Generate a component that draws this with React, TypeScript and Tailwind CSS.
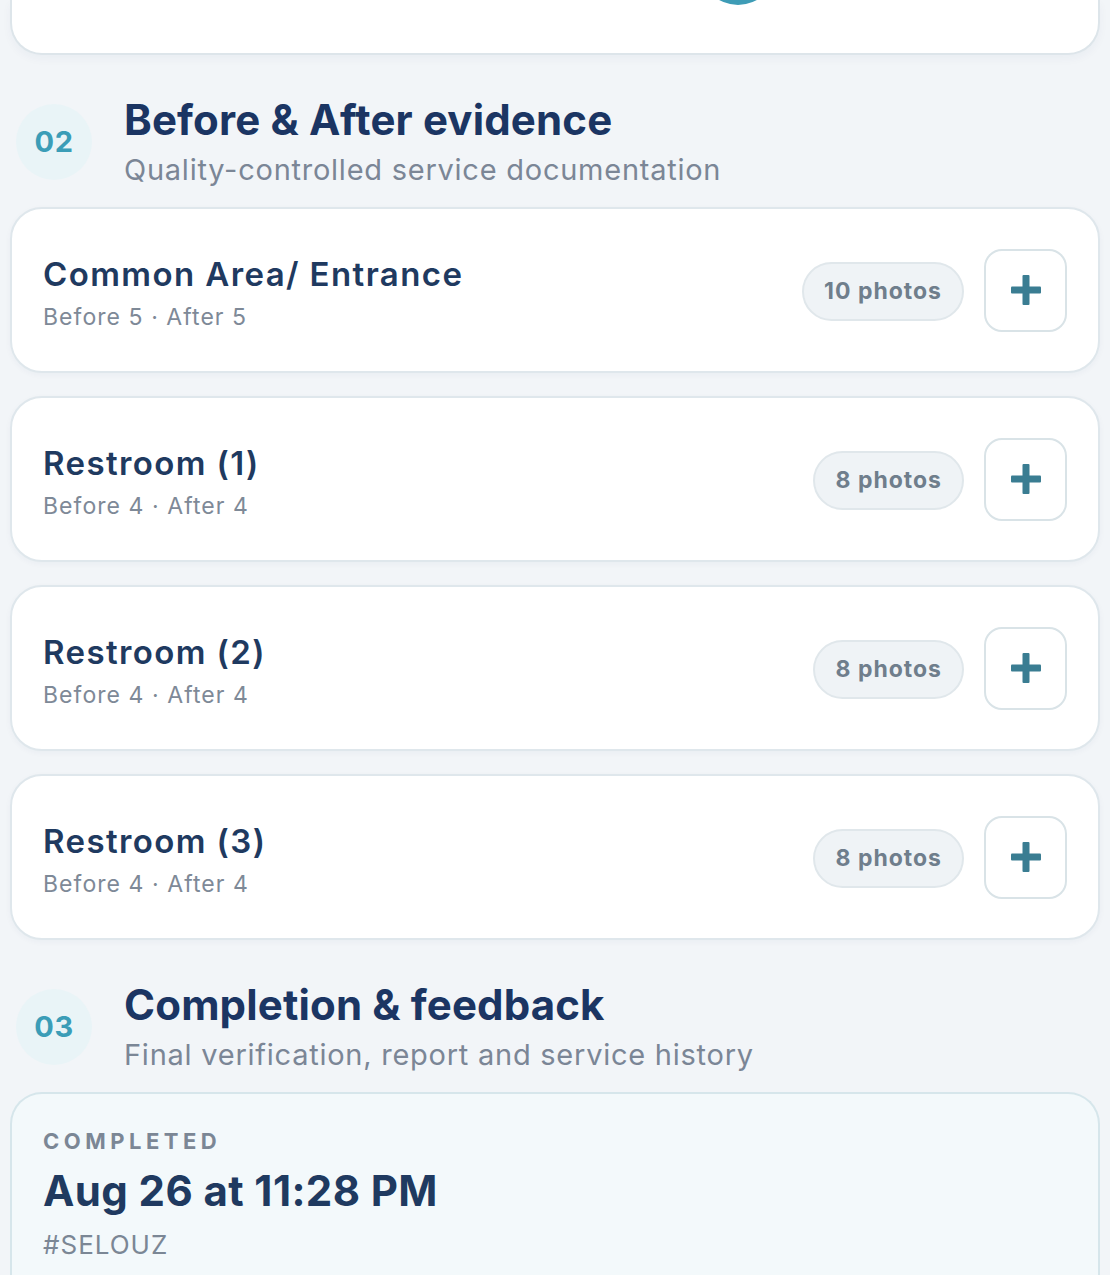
import React from "react";

const rooms = [
  { name: "Common Area/ Entrance", sub: "Before 5 · After 5", photos: "10 photos" },
  { name: "Restroom (1)", sub: "Before 4 · After 4", photos: "8 photos" },
  { name: "Restroom (2)", sub: "Before 4 · After 4", photos: "8 photos" },
  { name: "Restroom (3)", sub: "Before 4 · After 4", photos: "8 photos" },
];

function SectionHeader({ num, title, sub }: { num: string; title: string; sub: string }) {
  return (
    <div className="flex items-center pl-[6px]">
      <div className="w-[76px] h-[76px] rounded-full bg-[#e9f4f7] flex items-center justify-center shrink-0">
        <span className="text-[29px] font-bold text-[#3b9db7] tracking-[0.5px]">{num}</span>
      </div>
      <div className="ml-[32px] flex flex-col">
        <div className="text-[42px] leading-[48px] font-bold text-[#1b3563] tracking-[0.15px]">{title}</div>
        <div className="text-[29px] leading-[36px] text-[#7b8696] mt-[8px] tracking-[0.75px]">{sub}</div>
      </div>
    </div>
  );
}

function RoomCard({ name, sub, photos }: { name: string; sub: string; photos: string }) {
  return (
    <div className="h-[166px] rounded-[32px] border-2 border-[#dfe7ec] bg-white flex items-center pl-[31px] pr-[31px] shadow-[0_2px_6px_rgba(30,60,90,0.04)]">
      <div className="flex-1 flex flex-col pt-[6px]">
        <div className="text-[33px] leading-[40px] font-semibold text-[#1f3a60] tracking-[1.4px]">{name}</div>
        <div className="text-[23px] leading-[30px] text-[#7e8997] mt-[8px] tracking-[1.05px]">{sub}</div>
      </div>
      <div className="h-[59px] px-[20px] rounded-full bg-[#eff3f6] border-2 border-[#e0e7eb] flex items-center mt-[2px]">
        <span className="text-[23px] font-bold text-[#6f7e8c] tracking-[1px]">{photos}</span>
      </div>
      <div className="ml-[20px] w-[83px] h-[83px] rounded-[18px] border-2 border-[#d9e3e7] bg-white flex items-center justify-center">
        <svg width="32" height="32" viewBox="0 0 32 32">
          <rect x="12.5" y="1" width="7" height="30" rx="1" fill="#3a7d92" />
          <rect x="1" y="12.5" width="30" height="7" rx="1" fill="#3a7d92" />
        </svg>
      </div>
    </div>
  );
}

export default function App() {
  return (
    <div className="min-h-[1275px] bg-[#f2f5f8] px-[10px] overflow-hidden" style={{ fontFamily: "Inter, 'Noto Sans', sans-serif" }}>
      <div className="h-[55px] rounded-b-[32px] border-2 border-t-0 border-[#dde5ea] bg-white overflow-hidden shadow-[0_4px_10px_rgba(30,60,90,0.04)]">
        <div className="ml-[688px] mt-[-71px] w-[76px] h-[76px] rounded-full bg-[#3e9cb6]" />
      </div>

      <div className="mt-[41px]">
        <SectionHeader num="02" title="Before & After evidence" sub="Quality-controlled service documentation" />
      </div>

      <div className="mt-[19px] flex flex-col gap-[23px]">
        {rooms.map((r) => (
          <RoomCard key={r.name} {...r} />
        ))}
      </div>

      <div className="mt-[41px]">
        <SectionHeader num="03" title="Completion & feedback" sub="Final verification, report and service history" />
      </div>

      <div className="mt-[19px] rounded-t-[32px] border-2 border-b-0 border-[#d6e6eb] bg-[#f3f9fb] pl-[31px] pt-[33px] h-[200px]">
        <div className="text-[22px] leading-[28px] font-bold text-[#7b8795] tracking-[4.5px]">COMPLETED</div>
        <div className="text-[42px] leading-[52px] font-bold text-[#1f3a60] mt-[10px] tracking-[0.4px]">Aug 26 at 11:28 PM</div>
        <div className="text-[26px] leading-[34px] text-[#7b8795] mt-[11px] tracking-[1px]">#SELOUZ</div>
      </div>
    </div>
  );
}
